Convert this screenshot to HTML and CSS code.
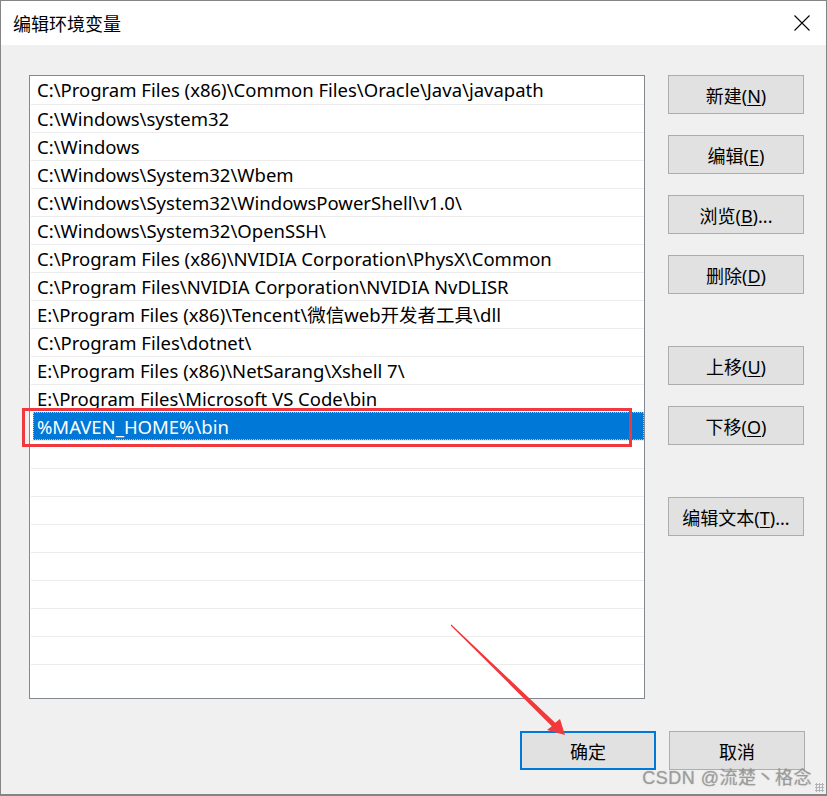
FILE: index.html
```html
<!DOCTYPE html>
<html lang="zh-CN">
<head>
    <meta charset="UTF-8">
    <title>编辑环境变量</title>
    <link rel="stylesheet" href="styles.css">
</head>
<body>

    <div class="window">
        <div class="titlebar">
            <span class="title">编辑环境变量</span>
            <svg class="close" width="16" height="16" viewBox="0 0 16 16">
                <path d="M0.5 0.5 L15.5 15.5 M15.5 0.5 L0.5 15.5" stroke="#000" stroke-width="1.1" fill="none"/>
            </svg>
        </div>

        <div class="content">
            <div class="main">
                <div class="listbox">
                    <div class="row">C:\Program Files (x86)\Common Files\Oracle\Java\javapath</div>
                    <div class="row">C:\Windows\system32</div>
                    <div class="row">C:\Windows</div>
                    <div class="row">C:\Windows\System32\Wbem</div>
                    <div class="row">C:\Windows\System32\WindowsPowerShell\v1.0\</div>
                    <div class="row">C:\Windows\System32\OpenSSH\</div>
                    <div class="row">C:\Program Files (x86)\NVIDIA Corporation\PhysX\Common</div>
                    <div class="row">C:\Program Files\NVIDIA Corporation\NVIDIA NvDLISR</div>
                    <div class="row">E:\Program Files (x86)\Tencent\微信web开发者工具\dll</div>
                    <div class="row">C:\Program Files\dotnet\</div>
                    <div class="row">E:\Program Files (x86)\NetSarang\Xshell 7\</div>
                    <div class="row">E:\Program Files\Microsoft VS Code\bin</div>
                    <div class="row selected">%MAVEN_HOME%\bin</div>
                    <div class="row"></div>
                    <div class="row"></div>
                    <div class="row"></div>
                    <div class="row"></div>
                    <div class="row"></div>
                    <div class="row"></div>
                    <div class="row"></div>
                    <div class="row"></div>
                    <div class="row"></div>
                </div>

                <div class="side">
                    <button class="btn">新建(<u>N</u>)</button>
                    <button class="btn">编辑(<u>E</u>)</button>
                    <button class="btn">浏览(<u>B</u>)...</button>
                    <button class="btn">删除(<u>D</u>)</button>
                    <button class="btn group">上移(<u>U</u>)</button>
                    <button class="btn">下移(<u>O</u>)</button>
                    <button class="btn group">编辑文本(<u>T</u>)...</button>
                </div>
            </div>

            <div class="footer">
                <button class="btn default">确定</button>
                <button class="btn">取消</button>
            </div>
        </div>

        <!-- annotations drawn over the dialog -->
        <div class="highlight"></div>
        <svg class="arrow" width="827" height="796" viewBox="0 0 827 796">
            <polygon points="451.4,624.6 555.2,722.7 560,719 565,735 547,730 551.8,726.3 450.6,625.4" fill="#f0393c"/>
        </svg>
        <div class="watermark">CSDN @流楚丶格念</div>
        <div class="grip"></div>
    </div>

</body>
</html>
```

FILE: styles.css
```css
body {
    margin: 0;
    font-family: "Noto Sans", "Noto Sans CJK SC", sans-serif;
    background-color: #f0f0f0;
}

.window {
    position: relative;
    width: 827px;
    height: 796px;
    box-sizing: border-box;
    border: 1px solid #858585;
    border-bottom-width: 2px;
    background-color: #f0f0f0;
    overflow: hidden;
}

.titlebar {
    height: 44px;
    background-color: #fff;
    display: flex;
    align-items: center;
    justify-content: space-between;
    padding: 0 16px 0 12px;
}

.title {
    font-family: "Noto Sans CJK SC", sans-serif;
    font-size: 18px;
    color: #000;
    margin-top: -1px;
}

.close {
    display: block;
    margin-top: -1px;
}

.content {
    padding: 30px 21px 0 28px;
}

.main {
    display: flex;
    gap: 23px;
}

.listbox {
    width: 616px;
    height: 624px;
    box-sizing: border-box;
    border: 1px solid #828790;
    background-color: #fff;
    overflow: hidden;
}

.row {
    height: 28px;
    box-sizing: border-box;
    margin-left: 1px;
    padding-left: 6px;
    font-size: 18.5px;
    line-height: 27px;
    color: #000;
    white-space: nowrap;
}

.row + .row {
    border-top: 1px solid #ececec;
}

.row.selected {
    margin-left: 3px;
    padding-left: 4px;
    background-color: #0078d7;
    color: #fff;
    border-top-color: #0078d7;
    outline: 1px dotted #f5b56a;
    outline-offset: -1px;
}

.side {
    display: flex;
    flex-direction: column;
    gap: 21px;
}

.btn {
    width: 136px;
    height: 39px;
    box-sizing: border-box;
    border: 1px solid #adadad;
    background-color: #e1e1e1;
    font-family: "Noto Sans", "Noto Sans CJK SC", sans-serif;
    font-size: 18px;
    color: #000;
    padding: 0;
    margin: 0;
}

.btn u {
    text-underline-offset: 2px;
}

.btn.group {
    margin-top: 31px;
}

.footer {
    display: flex;
    justify-content: flex-end;
    gap: 13px;
    margin-top: 32px;
}

.btn.default {
    border: 2px solid #0078d7;
}

.highlight {
    position: absolute;
    left: 21px;
    top: 407px;
    width: 610px;
    height: 39px;
    box-sizing: border-box;
    border: 3px solid #f0393c;
}

.arrow {
    position: absolute;
    left: -1px;
    top: -1px;
}

.watermark {
    position: absolute;
    right: 14px;
    bottom: 5px;
    font-family: "Liberation Sans", "Noto Sans CJK SC", sans-serif;
    font-size: 18px;
    color: rgba(150, 150, 150, 0.75);
    text-shadow: 0 0 1px rgba(90, 90, 90, 0.5);
    letter-spacing: 0.5px;
}

.grip {
    position: absolute;
    right: 2px;
    bottom: 2px;
    width: 9px;
    height: 9px;
    background-image: radial-gradient(#b5b5b5 1px, transparent 1.2px);
    background-size: 3px 3px;
}
```
